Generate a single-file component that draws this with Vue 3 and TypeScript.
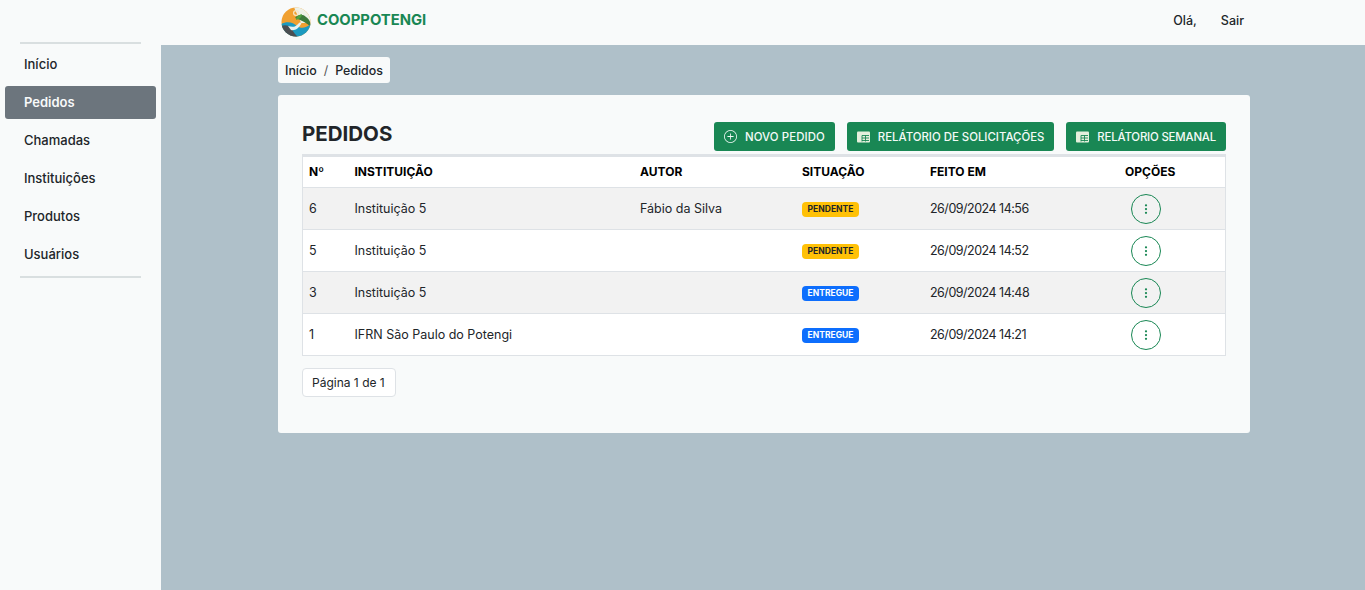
<script setup lang="ts">
import { ref } from 'vue';

type Pedido = {
  id: number;
  instituicao: string;
  autor: string;
  situacao: 'PENDENTE' | 'ENTREGUE';
  feitoEm: string;
};

const menu = ['Início', 'Pedidos', 'Chamadas', 'Instituições', 'Produtos', 'Usuários'];
const ativo = ref('Pedidos');

const pedidos: Pedido[] = [
  { id: 6, instituicao: 'Instituição 5', autor: 'Fábio da Silva', situacao: 'PENDENTE', feitoEm: '26/09/2024 14:56' },
  { id: 5, instituicao: 'Instituição 5', autor: '', situacao: 'PENDENTE', feitoEm: '26/09/2024 14:52' },
  { id: 3, instituicao: 'Instituição 5', autor: '', situacao: 'ENTREGUE', feitoEm: '26/09/2024 14:48' },
  { id: 1, instituicao: 'IFRN São Paulo do Potengi', autor: '', situacao: 'ENTREGUE', feitoEm: '26/09/2024 14:21' },
];
</script>

<template>
  <div class="page">
    <header class="topbar">
      <div class="topbar-inner">
        <a class="brand">
          <svg class="logo" viewBox="0 0 30 30" width="30" height="30">
            <defs>
              <clipPath id="logo-clip"><circle cx="15" cy="15" r="14.5" /></clipPath>
            </defs>
            <g clip-path="url(#logo-clip)">
              <rect width="30" height="30" fill="#f0a030" />
              <path d="M13 0 H30 V16 H20 C18 10 15 6 13 0 Z" fill="#eef1e6" />
              <path d="M14 11 C17 7 22 7 25 10 C28 12 30 15 30 20 C26 16 20 13 14 11 Z" fill="#3d7a3a" />
              <path d="M0 17 C6 14 12 15 16 19 C20 22 25 21 30 17 V30 H0 Z" fill="#1c9ac0" />
              <path d="M0 19 C5 17 9 19 11 22 C12 25 14 27 17 30 H0 Z" fill="#4a4e52" />
              <path d="M7 19 C11 20 14 21 18 16 C20 15 21 16 20 17 C18 21 14 24 10 23 Z" fill="#e9f1f0" />
            </g>
            <circle cx="15" cy="6" r="2.4" fill="none" stroke="#f4e6c8" stroke-width="1.2" />
            <path d="M15 13 C15 10 17 8 21 7 C21 10 19 12 15 13 Z" fill="#4fa23f" />
          </svg>
          <span class="brand-name">COOPPOTENGI</span>
        </a>
        <nav class="user-nav">
          <span>Olá,</span>
          <span>Sair</span>
        </nav>
      </div>
    </header>

    <div class="body-row">
      <aside class="sidebar">
        <hr class="rule" />
        <ul class="menu">
          <li v-for="item in menu" :key="item" :class="{ active: item === ativo }" @click="ativo = item">
            {{ item }}
          </li>
        </ul>
        <hr class="rule" />
      </aside>

      <main class="content">
        <div class="content-inner">
          <div class="breadcrumb">
            <span>Início</span>
            <span class="sep">/</span>
            <span>Pedidos</span>
          </div>

          <section class="card">
            <div class="card-head">
              <h1>PEDIDOS</h1>
              <div class="actions">
                <button class="btn">
                  <svg viewBox="0 0 16 16" width="13" height="13" fill="currentColor">
                    <path d="M8 15A7 7 0 1 1 8 1a7 7 0 0 1 0 14zm0 1A8 8 0 1 0 8 0a8 8 0 0 0 0 16z" />
                    <path d="M8 4a.5.5 0 0 1 .5.5v3h3a.5.5 0 0 1 0 1h-3v3a.5.5 0 0 1-1 0v-3h-3a.5.5 0 0 1 0-1h3v-3A.5.5 0 0 1 8 4z" />
                  </svg>
                  NOVO PEDIDO
                </button>
                <button class="btn">
                  <svg viewBox="0 0 13 12" width="13" height="12">
                    <rect x="0" y="0.5" width="13" height="11" rx="1" fill="#e4efdc" />
                    <path d="M5 4.5h7M5 7h7M5 9.5h7M5 4.5v6M8.5 4.5v6" stroke="#198754" stroke-width="0.9" fill="none" />
                  </svg>
                  RELÁTORIO DE SOLICITAÇÕES
                </button>
                <button class="btn">
                  <svg viewBox="0 0 13 12" width="13" height="12">
                    <rect x="0" y="0.5" width="13" height="11" rx="1" fill="#e4efdc" />
                    <path d="M5 4.5h7M5 7h7M5 9.5h7M5 4.5v6M8.5 4.5v6" stroke="#198754" stroke-width="0.9" fill="none" />
                  </svg>
                  RELÁTORIO SEMANAL
                </button>
              </div>
            </div>

            <table class="tabela">
              <thead>
                <tr>
                  <th class="col-id">Nº</th>
                  <th class="col-inst">INSTITUIÇÃO</th>
                  <th class="col-autor">AUTOR</th>
                  <th class="col-sit">SITUAÇÃO</th>
                  <th class="col-data">FEITO EM</th>
                  <th class="col-op">OPÇÕES</th>
                </tr>
              </thead>
              <tbody>
                <tr v-for="p in pedidos" :key="p.id">
                  <td>{{ p.id }}</td>
                  <td>{{ p.instituicao }}</td>
                  <td>{{ p.autor }}</td>
                  <td>
                    <span class="badge" :class="p.situacao === 'PENDENTE' ? 'warn' : 'info'">{{ p.situacao }}</span>
                  </td>
                  <td class="data">{{ p.feitoEm }}</td>
                  <td>
                    <button class="dots">
                      <svg viewBox="0 0 16 16" width="12" height="12" fill="currentColor">
                        <path d="M9.5 13a1.5 1.5 0 1 1-3 0 1.5 1.5 0 0 1 3 0zm0-5a1.5 1.5 0 1 1-3 0 1.5 1.5 0 0 1 3 0zm0-5a1.5 1.5 0 1 1-3 0 1.5 1.5 0 0 1 3 0z" />
                      </svg>
                    </button>
                  </td>
                </tr>
              </tbody>
            </table>

            <div class="pagina">Página 1 de 1</div>
          </section>
        </div>
      </main>
    </div>
  </div>
</template>

<style>
html,
body {
  margin: 0;
  background: #afc0c9;
}
</style>

<style scoped>
.page {
  min-height: 590px;
  display: flex;
  flex-direction: column;
  font-family: Inter, 'Liberation Sans', sans-serif;
  font-size: 13px;
  color: #212529;
  background: #afc0c9;
}
.topbar {
  height: 45px;
  background: #f8fafa;
  flex: none;
}
.topbar-inner {
  box-sizing: border-box;
  width: 972px;
  margin-left: 278px;
  height: 100%;
  padding-bottom: 2px;
  display: flex;
  align-items: center;
  justify-content: space-between;
}
.brand {
  display: flex;
  align-items: center;
  gap: 6px;
  padding-left: 3px;
  color: #198754;
  font-weight: 700;
  font-size: 14.8px;
}
.brand-name {
  padding-bottom: 3px;
}
.logo {
  flex: none;
}
.user-nav {
  display: flex;
  gap: 24px;
  padding: 0 6px 2px 0;
  font-size: 12.5px;
  font-weight: 500;
}
.body-row {
  display: flex;
  flex: 1;
}
.sidebar {
  width: 161px;
  flex: none;
  min-height: 545px;
  background: #f8fafa;
  box-sizing: border-box;
  padding: 0 5px;
}
.rule {
  border: none;
  height: 2px;
  background: #d9dfe0;
  margin: 0 15px;
}
.sidebar > .rule:first-child {
  margin-top: -3px;
}
.menu {
  list-style: none;
  margin: 4px 0 0;
  padding: 0;
}
.menu li {
  height: 33px;
  line-height: 33px;
  padding-left: 19px;
  margin: 0 0 5px;
  font-size: 13px;
  font-weight: 500;
  border-radius: 3px;
  color: #212529;
}
.menu li.active {
  background: #6c757d;
  color: #f8f9fa;
  font-weight: 600;
}
.content {
  flex: 1;
  min-width: 0;
}
.content-inner {
  width: 972px;
  margin-left: 117px;
  padding-top: 12px;
}
.breadcrumb {
  display: inline-flex;
  gap: 7px;
  align-items: center;
  height: 26px;
  padding: 0 7px;
  background: #f8fafa;
  border-radius: 3px;
  font-size: 12.4px;
  font-weight: 500;
}
.sep {
  font-weight: 400;
  color: #555;
}
.card {
  box-sizing: border-box;
  margin-top: 12px;
  height: 338px;
  padding: 27px 24px 0;
  background: #f8fafa;
  border-radius: 3px;
}
.card-head {
  display: flex;
  justify-content: space-between;
  align-items: flex-start;
  height: 32px;
}
h1 {
  margin: 0;
  font-size: 20.5px;
  line-height: 24px;
  font-weight: 700;
  color: #212529;
}
.actions {
  display: flex;
  gap: 12px;
}
.btn {
  display: inline-flex;
  align-items: center;
  gap: 8px;
  height: 29px;
  padding: 0 10px;
  border: none;
  border-radius: 3px;
  background: #198754;
  color: #f4faf7;
  font-family: inherit;
  font-size: 11.4px;
  font-weight: 500;
}
.btn:first-child {
  letter-spacing: 0.1px;
}
.btn:last-child {
  letter-spacing: -0.18px;
}
.tabela {
  width: 924px;
  table-layout: fixed;
  border-collapse: collapse;
  background: #fff;
  border-top: 3px solid #dee2e6;
  border-left: 1px solid #dee2e6;
  border-right: 1px solid #dee2e6;
}
.col-id { width: 46px; }
.col-inst { width: 285.5px; }
.col-autor { width: 162px; }
.col-sit { width: 128px; }
.col-data { width: 195px; }
th {
  box-sizing: border-box;
  height: 32px;
  padding: 0 0 2px 6px;
  text-align: left;
  font-size: 12px;
  font-weight: 700;
  color: #000;
  border-bottom: 1px solid #dee2e6;
}
td {
  box-sizing: border-box;
  height: 42px;
  padding: 0 0 0 6px;
  font-size: 12.5px;
  border-bottom: 1px solid #dee2e6;
}
td.data {
  letter-spacing: -0.5px;
}
tbody tr:nth-child(odd) {
  background: #f2f2f2;
}
.badge {
  display: inline-block;
  width: 57px;
  height: 15px;
  line-height: 15px;
  margin-top: 2px;
  text-align: center;
  border-radius: 4px;
  font-size: 8.5px;
  font-weight: 700;
}
.badge.warn {
  background: #ffc107;
  color: #212529;
}
.badge.info {
  background: #0d6efd;
  color: #fff;
}
.dots {
  display: flex;
  align-items: center;
  justify-content: center;
  width: 30px;
  height: 30px;
  margin-left: 6px;
  padding: 0;
  background: transparent;
  border: 1px solid #198754;
  border-radius: 50%;
  color: #198754;
}
.pagina {
  box-sizing: border-box;
  display: inline-flex;
  align-items: center;
  margin-top: 12px;
  width: 94px;
  height: 29px;
  padding-left: 9px;
  background: #fff;
  border: 1px solid #dee2e6;
  border-radius: 4px;
  font-size: 12px;
}
</style>
